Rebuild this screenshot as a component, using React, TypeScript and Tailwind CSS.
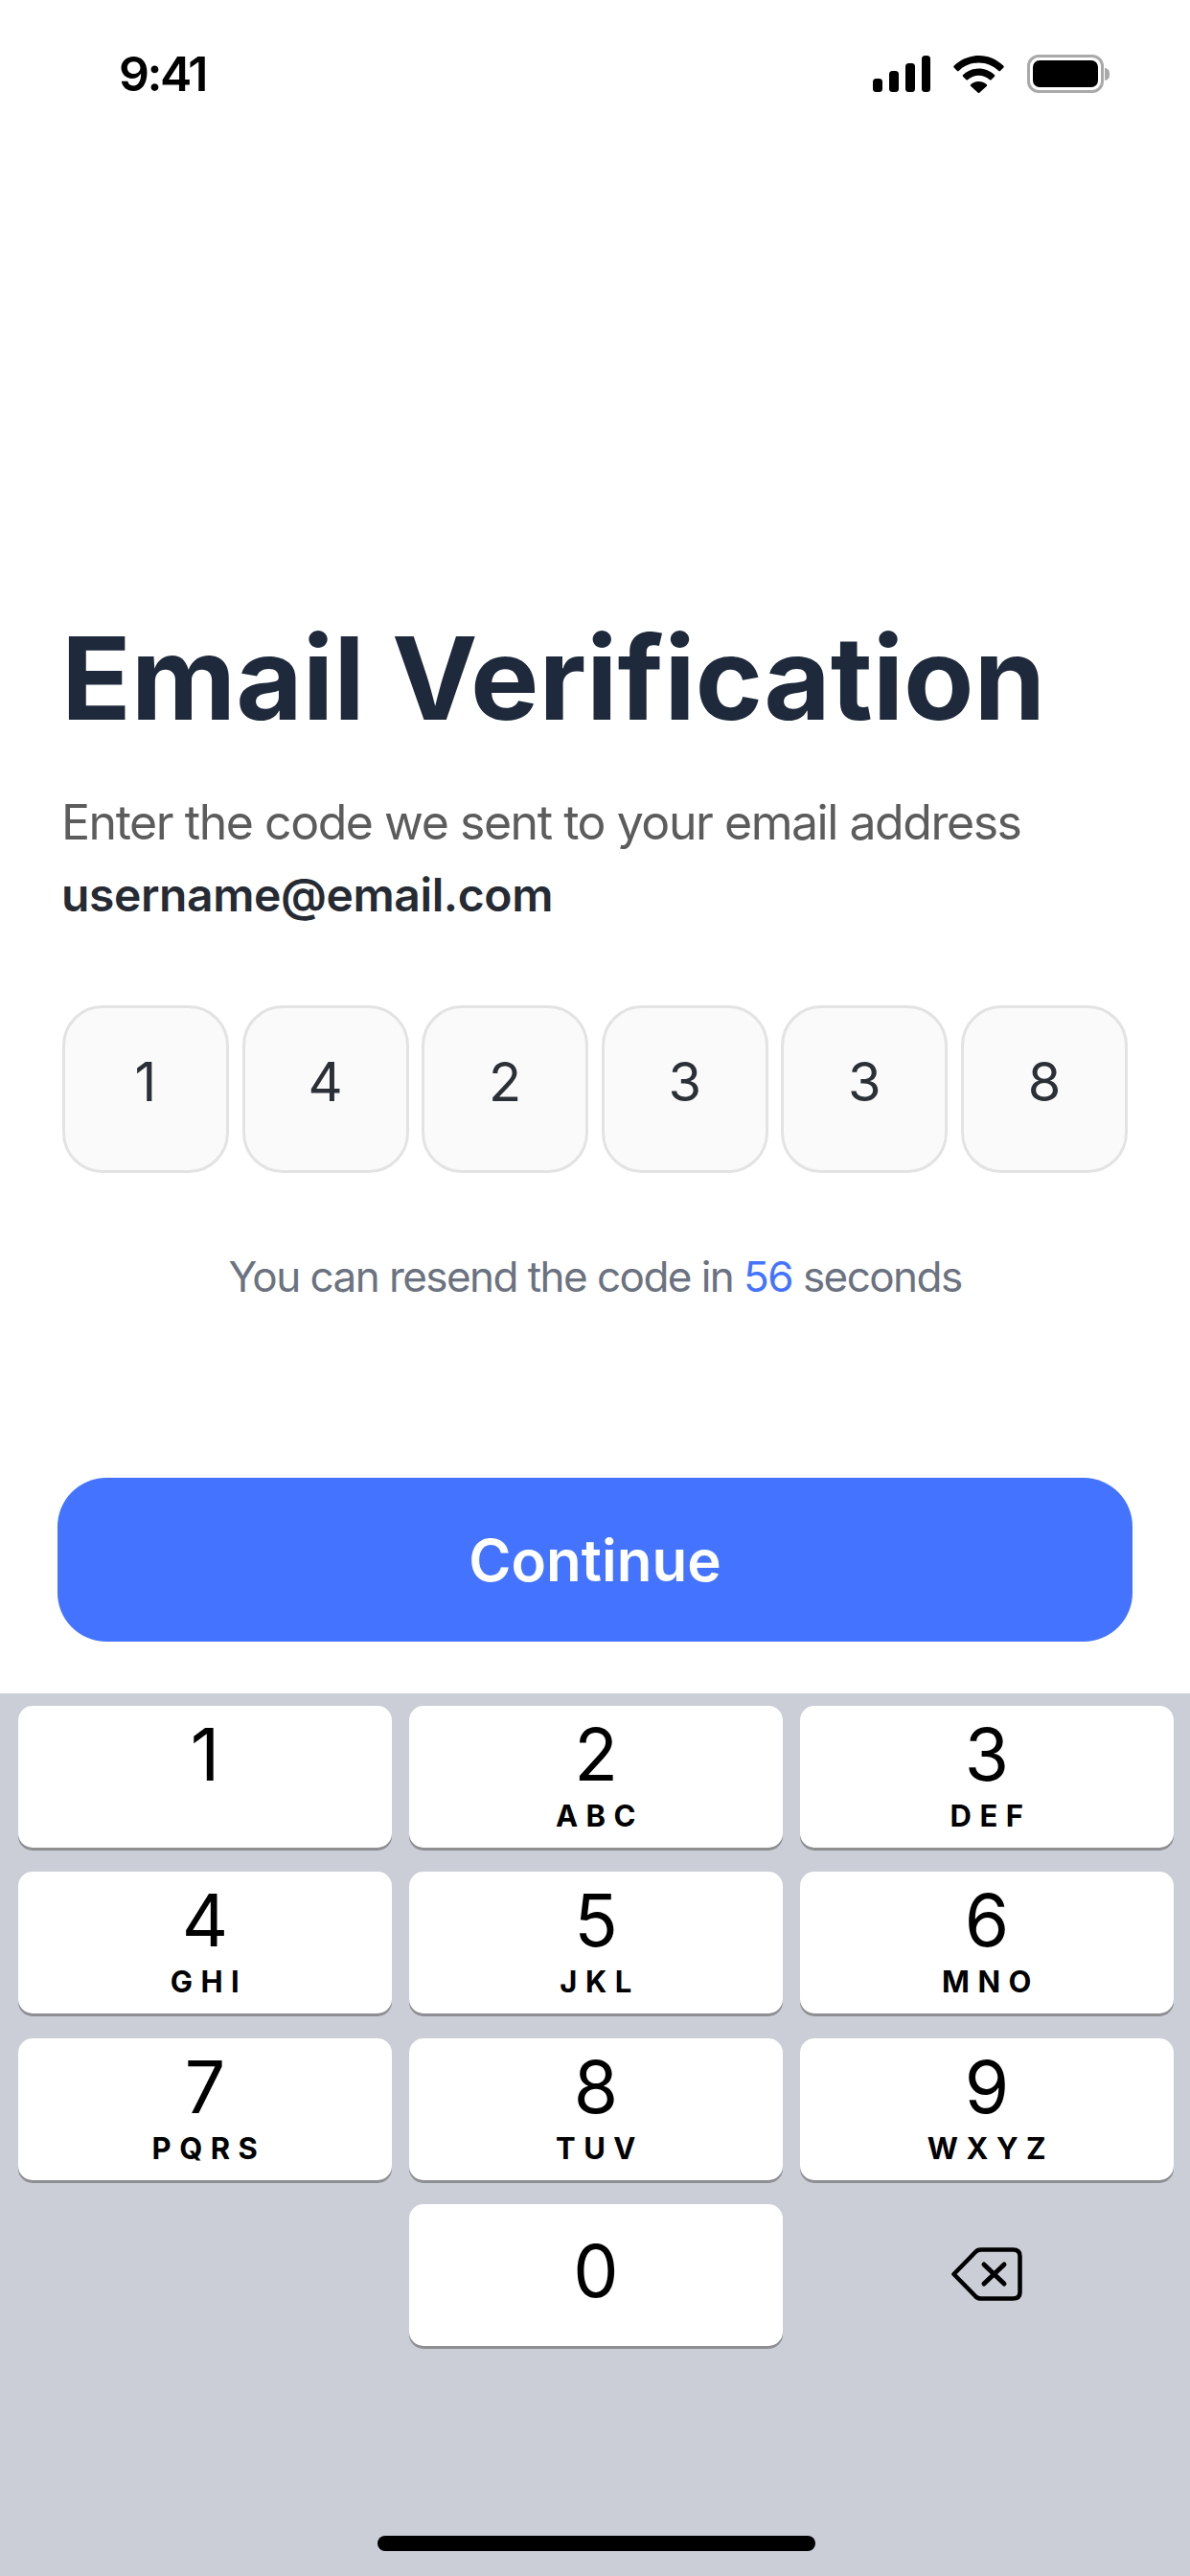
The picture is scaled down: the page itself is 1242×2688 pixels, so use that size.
const code = ["1", "4", "2", "3", "3", "8"];

const keys = [
  { n: "1", l: "" },
  { n: "2", l: "ABC" },
  { n: "3", l: "DEF" },
  { n: "4", l: "GHI" },
  { n: "5", l: "JKL" },
  { n: "6", l: "MNO" },
  { n: "7", l: "PQRS" },
  { n: "8", l: "TUV" },
  { n: "9", l: "WXYZ" },
];

const Key = ({ n, l }: { n: string; l: string }) => (
  <div className="flex h-[148px] flex-col items-center rounded-[15px] bg-white pt-[9px] text-black shadow-[0_3px_0_#8e8e93]">
    <span className="text-[75px] leading-[84px] font-normal">{n}</span>
    {l && (
      <span className="mt-[4px] pl-[8px] text-[31px] leading-[36px] font-bold tracking-[8.5px]">
        {l}
      </span>
    )}
  </div>
);

const StatusBar = () => (
  <div className="flex h-[132px] items-start justify-between pt-[50px] pr-[84px] pl-[124px]">
    <span className="text-[50px] leading-[54px] font-semibold tracking-[-2.5px] text-black">
      9:41
    </span>
    <div className="flex items-center gap-[24px] pt-[7px]">
      <svg width="60" height="38" viewBox="0 0 60 38" fill="#000">
        <rect x="0" y="24" width="10" height="14" rx="3.5" />
        <rect x="17" y="16" width="10" height="22" rx="3.5" />
        <rect x="34" y="8" width="10" height="30" rx="3.5" />
        <rect x="51" y="0" width="9" height="38" rx="3.5" />
      </svg>
      <svg width="53" height="39" viewBox="0 0 53 39" fill="#000">
        <path d="M26.5 0C16.5 0 7.5 4 0.8 10.6a1.5 1.5 0 0 0 0 2.1l3 3a1.5 1.5 0 0 0 2.1 0C11.3 10.5 18.5 7.4 26.5 7.4s15.2 3.1 20.6 8.3a1.5 1.5 0 0 0 2.1 0l3-3a1.5 1.5 0 0 0 0-2.1C45.5 4 36.5 0 26.5 0z" />
        <path d="M26.5 13.5c-6.3 0-12 2.5-16.3 6.5a1.5 1.5 0 0 0 0 2.1l3 3a1.5 1.5 0 0 0 2.1 0c3-2.7 6.9-4.3 11.2-4.3s8.2 1.6 11.2 4.3a1.5 1.5 0 0 0 2.1 0l3-3a1.5 1.5 0 0 0 0-2.1c-4.3-4-10-6.5-16.3-6.5z" />
        <path d="M26.5 27c-3.2 0-6 1.2-8.2 3.1a1.2 1.2 0 0 0 0 1.8l7.2 6.7a1.4 1.4 0 0 0 2 0l7.2-6.7a1.2 1.2 0 0 0 0-1.8C32.5 28.2 29.7 27 26.5 27z" />
      </svg>
      <div className="flex items-center gap-[1px]">
        <div className="flex h-[40px] w-[80px] items-center justify-center rounded-[12px] border-[3px] border-[#a9a9a9]">
          <div className="h-[28px] w-[68px] rounded-[7px] bg-black" />
        </div>
        <div className="h-[13px] w-[5px] rounded-r-full bg-[#a9a9a9]" />
      </div>
    </div>
  </div>
);

export default function App() {
  return (
    <div className="flex h-[2688px] w-[1242px] flex-col overflow-hidden bg-white font-[Inter,sans-serif]">
      <StatusBar />

      <main className="flex-1 px-[65px]">
        <h1 className="mt-[516px] -ml-[1px] text-[120px] leading-[120px] font-bold tracking-[-0.1px] whitespace-nowrap text-[#1e293b]">
          Email Verification
        </h1>

        <p className="mt-[52px] -ml-[1px] text-[50px] leading-[76px] tracking-[-1.46px] whitespace-nowrap text-[#5c5c5c]">
          Enter the code we sent to your email address
        </p>
        <p className="-ml-[1px] text-[48px] leading-[76px] font-semibold tracking-[-0.4px] text-[#262b33]">
          username@email.com
        </p>

        <div className="mt-[77px] flex gap-[13.6px]">
          {code.map((digit, i) => (
            <div
              key={i}
              className="flex h-[175px] w-[174px] items-center justify-center rounded-[42px] border-[3px] border-[#e3e3e3] bg-[#fafafa] pb-[16px] text-[56px] text-[#2b2f36]"
            >
              {digit}
            </div>
          ))}
        </div>

        <p className="mt-[78px] text-center text-[44px] leading-[60px] tracking-[-1.55px] text-[#6b7280]">
          You can resend the code in <span className="text-[#4474ff]">56</span>{" "}
          seconds
        </p>

        <button className="mt-[180px] -ml-[5px] h-[171px] w-[1122px] rounded-[51px] bg-[#4474ff] text-[60px] font-semibold text-white">
          Continue
        </button>
      </main>

      <div className="flex h-[921px] flex-col bg-[#cbced6] pt-[13px] pr-[17px] pl-[19px]">
        <div className="grid grid-cols-3 gap-x-[18px] gap-y-[25.3px]">
          {keys.map((k) => (
            <Key key={k.n} n={k.n} l={k.l} />
          ))}
          <div />
          <div className="flex h-[148px] items-center justify-center rounded-[15px] bg-white pb-[8px] text-[75px] text-black shadow-[0_3px_0_#8e8e93]">
            0
          </div>
          <div className="flex items-start justify-center pt-[45px]">
            <svg width="74" height="56" viewBox="0 0 74 56" fill="none" stroke="#000" strokeWidth="4.5" strokeLinejoin="round" strokeLinecap="round">
              <path d="M2.5 28 L25 5 Q27 2.5 31 2.5 H64 Q71.5 2.5 71.5 9 V47 Q71.5 53.5 64 53.5 H31 Q27 53.5 25 51 Z" />
              <path d="M34 18 L55 38 M55 18 L34 38" strokeWidth="5" />
            </svg>
          </div>
        </div>
        <div className="mt-auto mb-[26px] ml-[375px] h-[16px] w-[457px] rounded-full bg-black" />
      </div>
    </div>
  );
}
